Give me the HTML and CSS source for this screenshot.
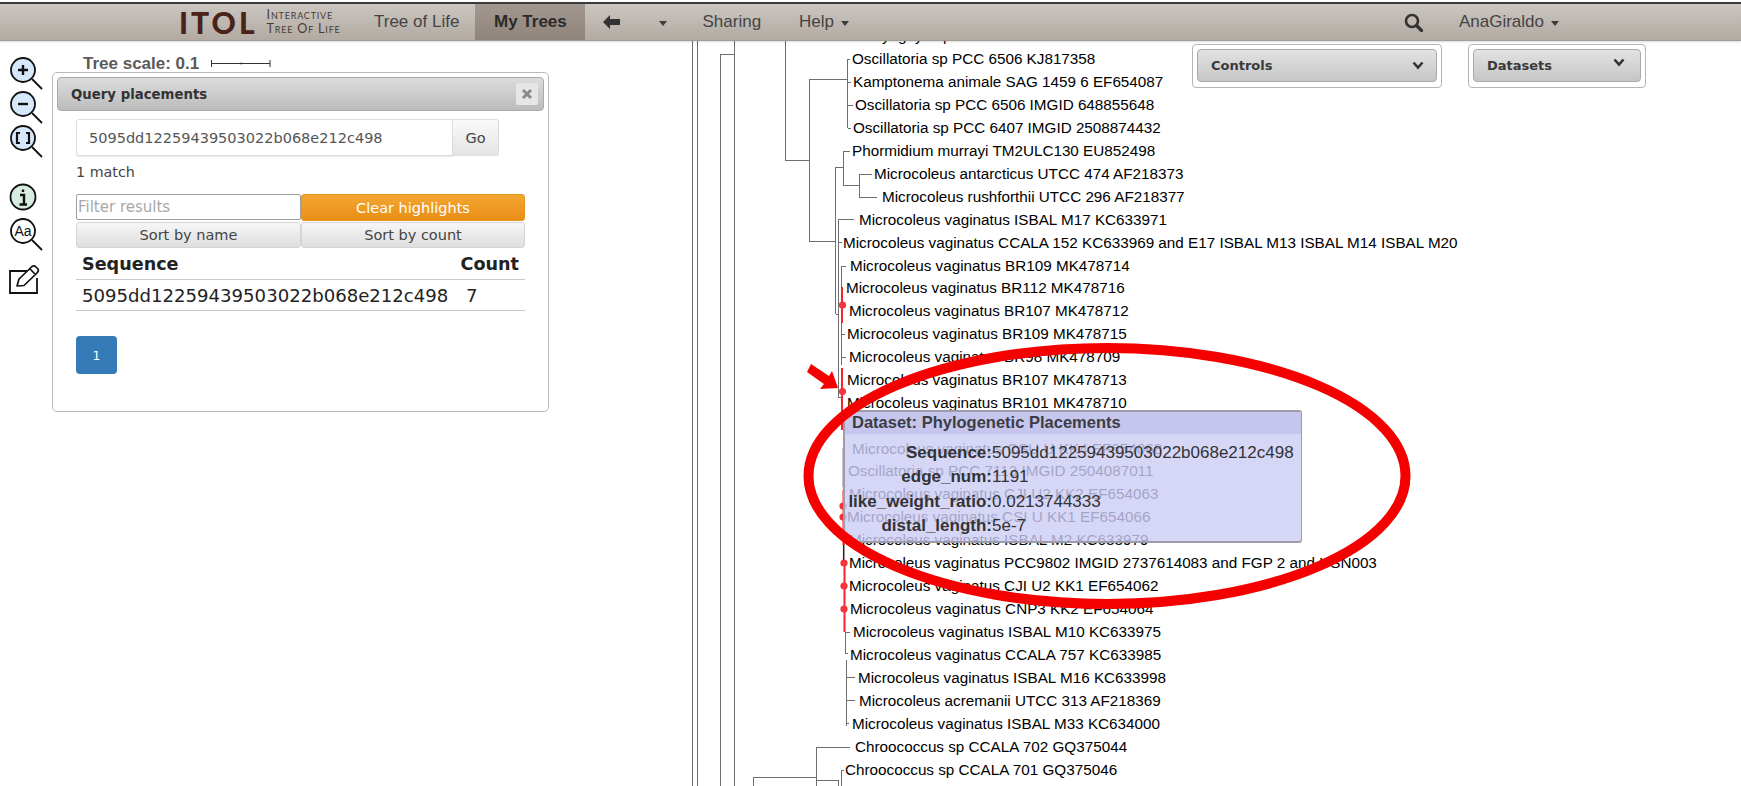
FILE: index.html
```html
<!DOCTYPE html>
<html lang="en">
<head>
<meta charset="utf-8">
<title>iTOL - Query placements</title>
<link rel="stylesheet" href="styles.css">
</head>
<body>
<div class="page">
  <header class="nav">
    <div class="logo"><span class="logo-mark">ITOL</span><span class="logo-sub">Interactive<br>Tree Of Life</span></div>
    <a class="nav-item tree-of-life">Tree of Life</a>
    <a class="nav-item active">My Trees</a>
    <a class="nav-item back"><svg width="17" height="14" viewBox="0 0 17 14"><path class="fill-dark" d="M0 7 7 0v4h10v6H7v4z"/></svg></a>
    <a class="nav-item back-menu"><i class="caret"></i></a>
    <a class="nav-item sharing">Sharing</a>
    <a class="nav-item help">Help<i class="caret"></i></a>
    <div class="nav-right">
      <svg class="search" width="19" height="19" viewBox="0 0 19 19"><circle class="search-ring" cx="8" cy="8" r="6"/><path class="search-handle" d="M12.5 12.5 17.5 17.5"/></svg>
      <a class="nav-item user">AnaGiraldo<i class="caret"></i></a>
    </div>
  </header>

  <svg class="tree" width="1741" height="786" viewBox="0 0 1741 786">
    <g class="branch">
      <path d="M692 41V786M697 41V786M720 54V786M734 41V786M720 54H734"/>
      <path d="M785 41V160H809M809 79V241M809 79H847M847 59V128M847 59H850M847 82H851M848 105H853M848 128H851"/>
      <path d="M809 241H836M835.500 167V314M835.500 167H843M835.500 314H838M843 151V185M843 151H850M843 185H859M859 174V197M859 174H872M859 197H877"/>
      <path d="M838 219.5H854M838 219.5V397M838 242.5H842M838 397H842M841.500 266V365M841.500 266H846M842 334H845M842 357H846"/>
      <path d="M845 632V653M846 632H850M845 653H848M846 660V726M846 677H855M846 700H855M846 723H849"/>
      <path d="M816 747H850M816 747V786M753 777H816M753 777V786M816 780H838M838 780V786M841 770V786M841 770H844"/>
    </g>
    <path class="dark-branch" d="M843.500 448V487M843.700 540V565"/>
    <path class="placement" d="M842 287V323M842 368V430M843.500 490V545M844.500 565V632"/>
    <g class="dots">
      <circle cx="842.5" cy="305" r="3.6"/><circle cx="842.5" cy="391.5" r="3.6"/><circle cx="843" cy="506" r="3.6"/><circle cx="843" cy="517" r="3.6"/><circle cx="844" cy="563" r="3.6"/><circle cx="844" cy="586" r="3.6"/><circle cx="844" cy="609" r="3.6"/>
    </g>
    <g class="labels">
      <text x="874" y="41">Lyngbya sp PCC 8106 AB075989</text>
      <text x="852" y="64">Oscillatoria sp PCC 6506 KJ817358</text>
      <text x="853" y="87">Kamptonema animale SAG 1459 6 EF654087</text>
      <text x="855" y="110">Oscillatoria sp PCC 6506 IMGID 648855648</text>
      <text x="853" y="133">Oscillatoria sp PCC 6407 IMGID 2508874432</text>
      <text x="852" y="156">Phormidium murrayi TM2ULC130 EU852498</text>
      <text x="874" y="179">Microcoleus antarcticus UTCC 474 AF218373</text>
      <text x="882" y="202">Microcoleus rushforthii UTCC 296 AF218377</text>
      <text x="859" y="225">Microcoleus vaginatus ISBAL M17 KC633971</text>
      <text x="843" y="248">Microcoleus vaginatus CCALA 152 KC633969 and E17 ISBAL M13 ISBAL M14 ISBAL M20</text>
      <text x="850" y="271">Microcoleus vaginatus BR109 MK478714</text>
      <text x="846" y="293">Microcoleus vaginatus BR112 MK478716</text>
      <text x="849" y="316">Microcoleus vaginatus BR107 MK478712</text>
      <text x="847" y="339">Microcoleus vaginatus BR109 MK478715</text>
      <text x="849" y="362">Microcoleus vaginatus BR98 MK478709</text>
      <text x="847" y="385">Microcoleus vaginatus BR107 MK478713</text>
      <text x="847" y="408">Microcoleus vaginatus BR101 MK478710</text>
      <text x="852" y="454">Microcoleus vaginatus CSU U KK4 EF654068</text>
      <text x="848" y="476">Oscillatoria sp PCC 7113 IMGID 2504087011</text>
      <text x="849" y="499">Microcoleus vaginatus CJI U2 KK2 EF654063</text>
      <text x="847" y="522">Microcoleus vaginatus CSI U KK1 EF654066</text>
      <text x="849" y="545">Microcoleus vaginatus ISBAL M2 KC633979</text>
      <text x="849" y="568">Microcoleus vaginatus PCC9802 IMGID 2737614083 and FGP 2 and USN003</text>
      <text x="849" y="591">Microcoleus vaginatus CJI U2 KK1 EF654062</text>
      <text x="850" y="614">Microcoleus vaginatus CNP3 KK2 EF654064</text>
      <text x="853" y="637">Microcoleus vaginatus ISBAL M10 KC633975</text>
      <text x="850" y="660">Microcoleus vaginatus CCALA 757 KC633985</text>
      <text x="858" y="683">Microcoleus vaginatus ISBAL M16 KC633998</text>
      <text x="859" y="706">Microcoleus acremanii UTCC 313 AF218369</text>
      <text x="852" y="729">Microcoleus vaginatus ISBAL M33 KC634000</text>
      <text x="855" y="752">Chroococcus sp CCALA 702 GQ375044</text>
      <text x="845" y="775">Chroococcus sp CCALA 701 GQ375046</text>
    </g>
  </svg>

  <div class="tree-scale"><span>Tree scale: 0.1</span><svg width="60" height="9" viewBox="0 0 60 9"><path class="scale-bar" d="M.5 1V8M.5 4.5H59M59 1V8M30 3.5V5.5"/></svg></div>

  <nav class="tools">
    <svg class="tool" width="34" height="34" viewBox="0 0 34 34"><circle class="lens blue" cx="14" cy="13" r="12"/><path class="glass" d="M23 22 33 32"/><path class="glyph" d="M14 8V18M9 13H19"/></svg>
    <svg class="tool" width="34" height="34" viewBox="0 0 34 34"><circle class="lens blue" cx="14" cy="13" r="12"/><path class="glass" d="M23 22 33 32"/><path class="glyph" d="M9 13H19"/></svg>
    <svg class="tool" width="34" height="34" viewBox="0 0 34 34"><circle class="lens blue" cx="14" cy="13" r="12"/><path class="glass" d="M23 22 33 32"/><path class="glyph thin" d="M11 8H8V18H11M17 8H20V18H17"/></svg>
    <svg class="tool tool-info" width="34" height="28" viewBox="0 0 34 28"><circle class="lens green" cx="14" cy="14" r="12.5"/><path class="glyph" d="M14 6.5V9M11 12H15V21M10.5 21.5H18"/></svg>
    <svg class="tool tool-aa" width="34" height="34" viewBox="0 0 34 34"><circle class="lens" cx="14" cy="13" r="12"/><path class="glass" d="M23 22 33 32"/><text class="aa" x="14" y="18">Aa</text></svg>
    <svg class="tool tool-edit" width="32" height="30" viewBox="0 0 32 30"><path class="glass" d="M19 7H1V29H28V14"/><path class="pencil" d="M8 22 10 15 23 2.5Q25 1 27 3L29 5Q30 7 28 9L15 21.5ZM21 5 26.500 10.500"/></svg>
  </nav>

  <section class="panel">
    <div class="panel-head">
      <span class="panel-title">Query placements</span>
      <button class="close"><svg width="12" height="12" viewBox="0 0 12 12"><path class="close-x" d="M2 2 10 10M10 2 2 10"/></svg></button>
    </div>
    <div class="panel-body">
      <div class="search-row">
        <div class="query">5095dd12259439503022b068e212c498</div>
        <div class="go">Go</div>
      </div>
      <div class="match">1 match</div>
      <div class="controls-grid">
        <div class="filter">Filter results</div>
        <div class="btn btn-orange">Clear highlights</div>
        <div class="btn">Sort by name</div>
        <div class="btn">Sort by count</div>
      </div>
      <div class="result-row result-head"><span>Sequence</span><span>Count</span></div>
      <div class="result-row"><span>5095dd12259439503022b068e212c498</span><span class="count">7</span></div>
      <div class="page-btn">1</div>
    </div>
  </section>

  <div class="drop drop-controls"><div class="drop-btn"><span>Controls</span><svg width="12" height="9" viewBox="0 0 12 9"><path class="chev" d="M1.500 1.500 6 6.500 10.500 1.500"/></svg></div></div>
  <div class="drop drop-datasets"><div class="drop-btn"><span>Datasets</span><svg class="chev-up" width="12" height="9" viewBox="0 0 12 9"><path class="chev" d="M1.500 1.500 6 6.500 10.500 1.500"/></svg></div></div>

  <div class="tip">
    <div class="tip-head">Dataset: Phylogenetic Placements</div>
    <dl class="tip-body">
      <dt>Sequence:</dt><dd>5095dd12259439503022b068e212c498</dd>
      <dt>edge_num:</dt><dd>1191</dd>
      <dt>like_weight_ratio:</dt><dd>0.0213744333</dd>
      <dt>distal_length:</dt><dd>5e-7</dd>
    </dl>
  </div>

  <svg class="annot" width="1741" height="786" viewBox="0 0 1741 786">
    <ellipse class="ring" cx="1107" cy="476" rx="298.500" ry="128"/>
    <path class="arrow" d="M811 364 829 376 832 371 838 388 820 389 824 384 807 372Z"/>
  </svg>
</div>
</body>
</html>
```
FILE: styles.css
```css
* { box-sizing: border-box; }
html, body { margin: 0; padding: 0; background: #fff; }
.page { position: relative; width: 1741px; height: 786px; overflow: hidden; font-family: "Liberation Sans", Arial, sans-serif; color: #333; }

/* top bar */
.nav { position: relative; z-index: 3; display: flex; align-items: stretch; height: 39px; margin-top: 2px; padding-left: 179px; border-top: 2px solid #3a3a3a; border-bottom: 1px solid #a49c94; background: linear-gradient(#cbc6c0, #b2aaa3); box-shadow: 0 1px 2px rgba(0,0,0,.15); }
.logo { display: flex; align-items: center; width: 176px; }
.logo-mark { font-family: "Lato", sans-serif; font-weight: 900; font-size: 30px; letter-spacing: 3px; color: #4a2318; line-height: 1; }
.logo-sub { margin-left: 9px; font-family: "Lato", sans-serif; font-variant: small-caps; font-size: 12.600px; line-height: 14px; letter-spacing: .8px; color: #4a3a32; white-space: nowrap; }
.nav-item { display: flex; align-items: center; font-size: 17px; color: #444; white-space: nowrap; }
.tree-of-life { width: 120px; padding-left: 19px; }
.active { width: 110px; padding-left: 19px; font-weight: 700; color: #2a2a2a; background: linear-gradient(#a3988f, #8f847b); }
.back { width: 58px; padding-left: 17.500px; }
.back-menu { width: 59.500px; padding-left: 16px; }
.sharing { width: 96.500px; }
.help { gap: 7px; }
.caret { display: inline-block; width: 0; height: 0; border-left: 4.500px solid transparent; border-right: 4.500px solid transparent; border-top: 5px solid #3c3c3c; margin-top: 2px; }
.fill-dark { fill: #333; }
.nav-right { display: flex; align-items: center; margin-left: auto; padding-right: 182px; }
.search { margin-right: 36px; }
.search-ring { fill: none; stroke: #333; stroke-width: 2.600; }
.search-handle { stroke: #333; stroke-width: 3.200; stroke-linecap: round; }
.user { gap: 7px; }

/* tree canvas */
.tree { position: absolute; left: 0; top: 0; z-index: 1; }
.branch path { fill: none; stroke: #6f6f6f; stroke-width: 1; shape-rendering: crispEdges; }
.dark-branch { fill: none; stroke: #222; stroke-width: 1.500; }
.placement { fill: none; stroke: #f5262b; stroke-width: 2; }
.dots circle { fill: #f5343a; }
.labels text { font-family: "Liberation Sans", Arial, sans-serif; font-size: 15.250px; fill: #000; }

.tree-scale { position: absolute; z-index: 2; left: 83px; top: 54px; display: flex; align-items: center; gap: 12px; font-size: 17px; font-weight: 700; color: #5a5a5a; line-height: 19px; }
.scale-bar { fill: none; stroke: #333; stroke-width: 1; }

/* left tools */
.tools { position: absolute; z-index: 2; left: 9px; top: 57px; display: flex; flex-direction: column; align-items: flex-start; }
.tool { display: block; }
.lens { fill: #fff; stroke: #111; stroke-width: 1.800; }
.blue { fill: #d6e8fb; }
.green { fill: #d5ecdf; }
.glass { fill: none; stroke: #111; stroke-width: 1.800; }
.glyph { fill: none; stroke: #111; stroke-width: 2.400; }
.thin { stroke-width: 2.200; }
.aa { font-family: "Liberation Sans", sans-serif; font-size: 14px; text-anchor: middle; fill: #111; }
.tool-info { margin-top: 24px; }
.tool-aa { margin-top: 7px; }
.tool-edit { margin-top: 12px; }
.pencil { fill: #fff; stroke: #111; stroke-width: 1.700; stroke-linejoin: round; }

/* query panel */
.panel { position: absolute; z-index: 2; left: 52px; top: 72px; width: 497px; height: 340px; padding: 4px; background: #fff; border: 1px solid #b9b9b9; border-radius: 5px; font-family: "DejaVu Sans", Verdana, sans-serif; }
.panel-head { display: flex; align-items: center; justify-content: space-between; height: 34px; padding: 0 5px 0 13px; border: 1px solid #aaa; border-radius: 4px; background: linear-gradient(#dcdcdc, #bcbcbc); }
.panel-title { font-size: 13.300px; font-weight: 700; color: #333; }
.close { display: flex; align-items: center; justify-content: center; width: 22px; height: 22px; padding: 0; border: 0; border-radius: 2px; background: #e6e6e6; }
.close-x { fill: none; stroke: #8a8a8a; stroke-width: 3; }
.panel-body { padding: 8px 18px 0 19px; }
.search-row { display: flex; height: 37px; width: 423px; }
.query { display: flex; align-items: center; flex: 1; padding-left: 12px; font-size: 14.500px; color: #555; border: 1px solid #ddd; border-radius: 3px 0 0 3px; box-shadow: 0 1px 1px #e8e8e8; }
.go { display: flex; align-items: center; justify-content: center; width: 46px; font-size: 14.500px; color: #444; border: 1px solid #ddd; border-left: 0; border-radius: 0 3px 3px 0; background: linear-gradient(#fafafa, #e4e4e4); }
.match { margin-top: 8px; font-size: 14.300px; line-height: 16px; color: #444; }
.controls-grid { display: grid; grid-template-columns: 225px 224px; grid-template-rows: 28px 26px; margin-top: 14px; width: 449px; }
.filter { display: flex; align-items: center; padding-left: 1px; height: 26px; font-size: 15px; color: #a8a8a8; border: 1px solid #9f9f9f; border-radius: 2px; }
.btn { display: flex; align-items: center; justify-content: center; font-size: 14.500px; color: #444; border: 1px solid #d4d4d4; border-radius: 3px; background: linear-gradient(#f6f6f6, #dedede); }
.btn-orange { height: 27px; color: #fff; border-color: #e8941f; background: linear-gradient(#f2a632, #ea8f17); }
.result-row { display: flex; align-items: center; justify-content: space-between; width: 449px; height: 31px; padding: 0 6px; font-size: 18.100px; color: #222; border-bottom: 1px solid #c9c9c9; white-space: nowrap; }
.result-head { height: 32px; font-size: 17.600px; font-weight: 700; }
.count { width: 53px; }
.page-btn { display: flex; align-items: center; justify-content: center; width: 41px; height: 38px; margin-top: 25px; font-size: 12.500px; color: #fff; background: #337ab7; border-radius: 4px; }

/* controls */
.drop { position: absolute; z-index: 2; top: 44px; height: 44px; padding: 4px; border: 1px solid #b5b5b5; border-radius: 4px; background: #fff; }
.drop-controls { left: 1192px; width: 250px; }
.drop-datasets { left: 1468px; width: 178px; }
.drop-btn { display: flex; align-items: center; justify-content: space-between; height: 33px; padding: 0 12px 0 13px; font-family: "DejaVu Sans", Verdana, sans-serif; font-size: 13px; font-weight: 700; color: #3a3a3a; border: 1px solid #aaa; border-radius: 4px; background: linear-gradient(#e2e2e2, #c6c6c6); }
.chev { fill: none; stroke: #333; stroke-width: 2.600; }
.chev-up { margin: 0 3px 6px 0; }

/* tooltip */
.tip { position: absolute; z-index: 2; left: 843px; top: 410px; width: 459px; height: 133px; background: rgba(204,204,245,.8); border: 1px solid #9c9cab; border-width: 2px 1px 2px 2px; border-radius: 3px; color: #333; }
.tip-head { height: 22px; padding-left: 7px; font-size: 16.500px; font-weight: 700; line-height: 21px; color: #3c3c44; background: rgba(195,195,236,.9); }
.tip-body { display: grid; grid-template-columns: 147px 1fr; grid-auto-rows: 24.300px; margin: 7px 0 0; font-size: 17px; line-height: 24px; }
.tip-body dt { font-weight: 700; text-align: right; white-space: nowrap; }
.tip-body dd { margin: 0; color: #333; white-space: nowrap; }

/* annotation */
.annot { position: absolute; left: 0; top: 0; z-index: 4; pointer-events: none; }
.ring { fill: none; stroke: #f40000; stroke-width: 10; }
.arrow { fill: #f40000; }
```
